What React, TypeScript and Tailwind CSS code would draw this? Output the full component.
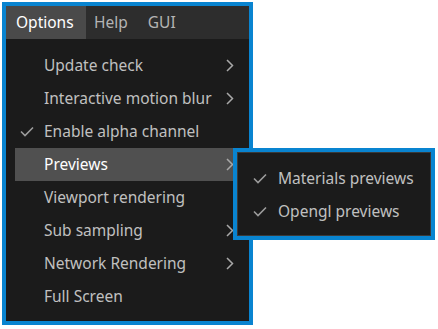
import React from 'react';

const items = [
  { label: 'Update check', sub: true },
  { label: 'Interactive motion blur', sub: true },
  { label: 'Enable alpha channel', checked: true },
  { label: 'Previews', sub: true, active: true },
  { label: 'Viewport rendering' },
  { label: 'Sub sampling', sub: true },
  { label: 'Network Rendering', sub: true },
  { label: 'Full Screen' },
];

function Check() {
  return (
    <svg width="14" height="11" viewBox="0 0 14 11" fill="none">
      <path d="M1 5.5 L5 9.5 L13 1.5" stroke="#9c9c9c" strokeWidth="1.6" />
    </svg>
  );
}

function Chevron() {
  return (
    <svg width="8" height="13" viewBox="0 0 8 13" fill="none">
      <path d="M1 1 L6.5 6.5 L1 12" stroke="#a8a8a8" strokeWidth="1.5" />
    </svg>
  );
}

export default function App() {
  return (
    <div className="relative w-[438px] h-[329px] bg-white" style={{ fontFamily: '"Noto Sans", "Open Sans", sans-serif' }}>
      <div className="absolute left-[2px] top-[2px] w-[251px] h-[323px] border-4 border-[#0984d0] bg-[#1b1b1b] flex flex-col">
        {/* menu bar */}
        <div className="h-[33px] bg-[#2d2d2d] flex items-center text-[15.5px] shrink-0">
          <div className="h-full w-[80px] bg-[#4a4a4a] flex items-center pl-[10px] text-white">Options</div>
          <div className="pl-[8px] text-[#b4b4b4]">Help</div>
          <div className="pl-[20px] text-[#b4b4b4]">GUI</div>
        </div>
        {/* dropdown */}
        <div className="pt-[10px] pl-[9px] pr-[13px] text-[15.5px]">
          {items.map((it) => (
            <div key={it.label} className={`h-[33px] flex items-center ${it.active ? 'bg-[#505050] text-white' : 'text-[#c0c0c0]'}`}>
              <div className="w-[29px] pl-[5px] flex items-center">{it.checked && <Check />}</div>
              <div className="flex-1">{it.label}</div>
              <div className="w-[10px] flex items-center">{it.sub && <Chevron />}</div>
            </div>
          ))}
        </div>
      </div>

      {/* submenu */}
      <div className="absolute left-[233px] top-[148px] w-[202px] h-[92px] border-4 border-[#0984d0]">
        <div className="h-full border border-[#3a3a3a] bg-[#1b1b1b] pt-[9px] text-[15.5px] text-[#c0c0c0]">
          {['Materials previews', 'Opengl previews'].map((l) => (
            <div key={l} className="h-[33px] flex items-center">
              <div className="w-[40px] pl-[15px] flex items-center"><Check /></div>
              <div>{l}</div>
            </div>
          ))}
        </div>
      </div>
    </div>
  );
}
